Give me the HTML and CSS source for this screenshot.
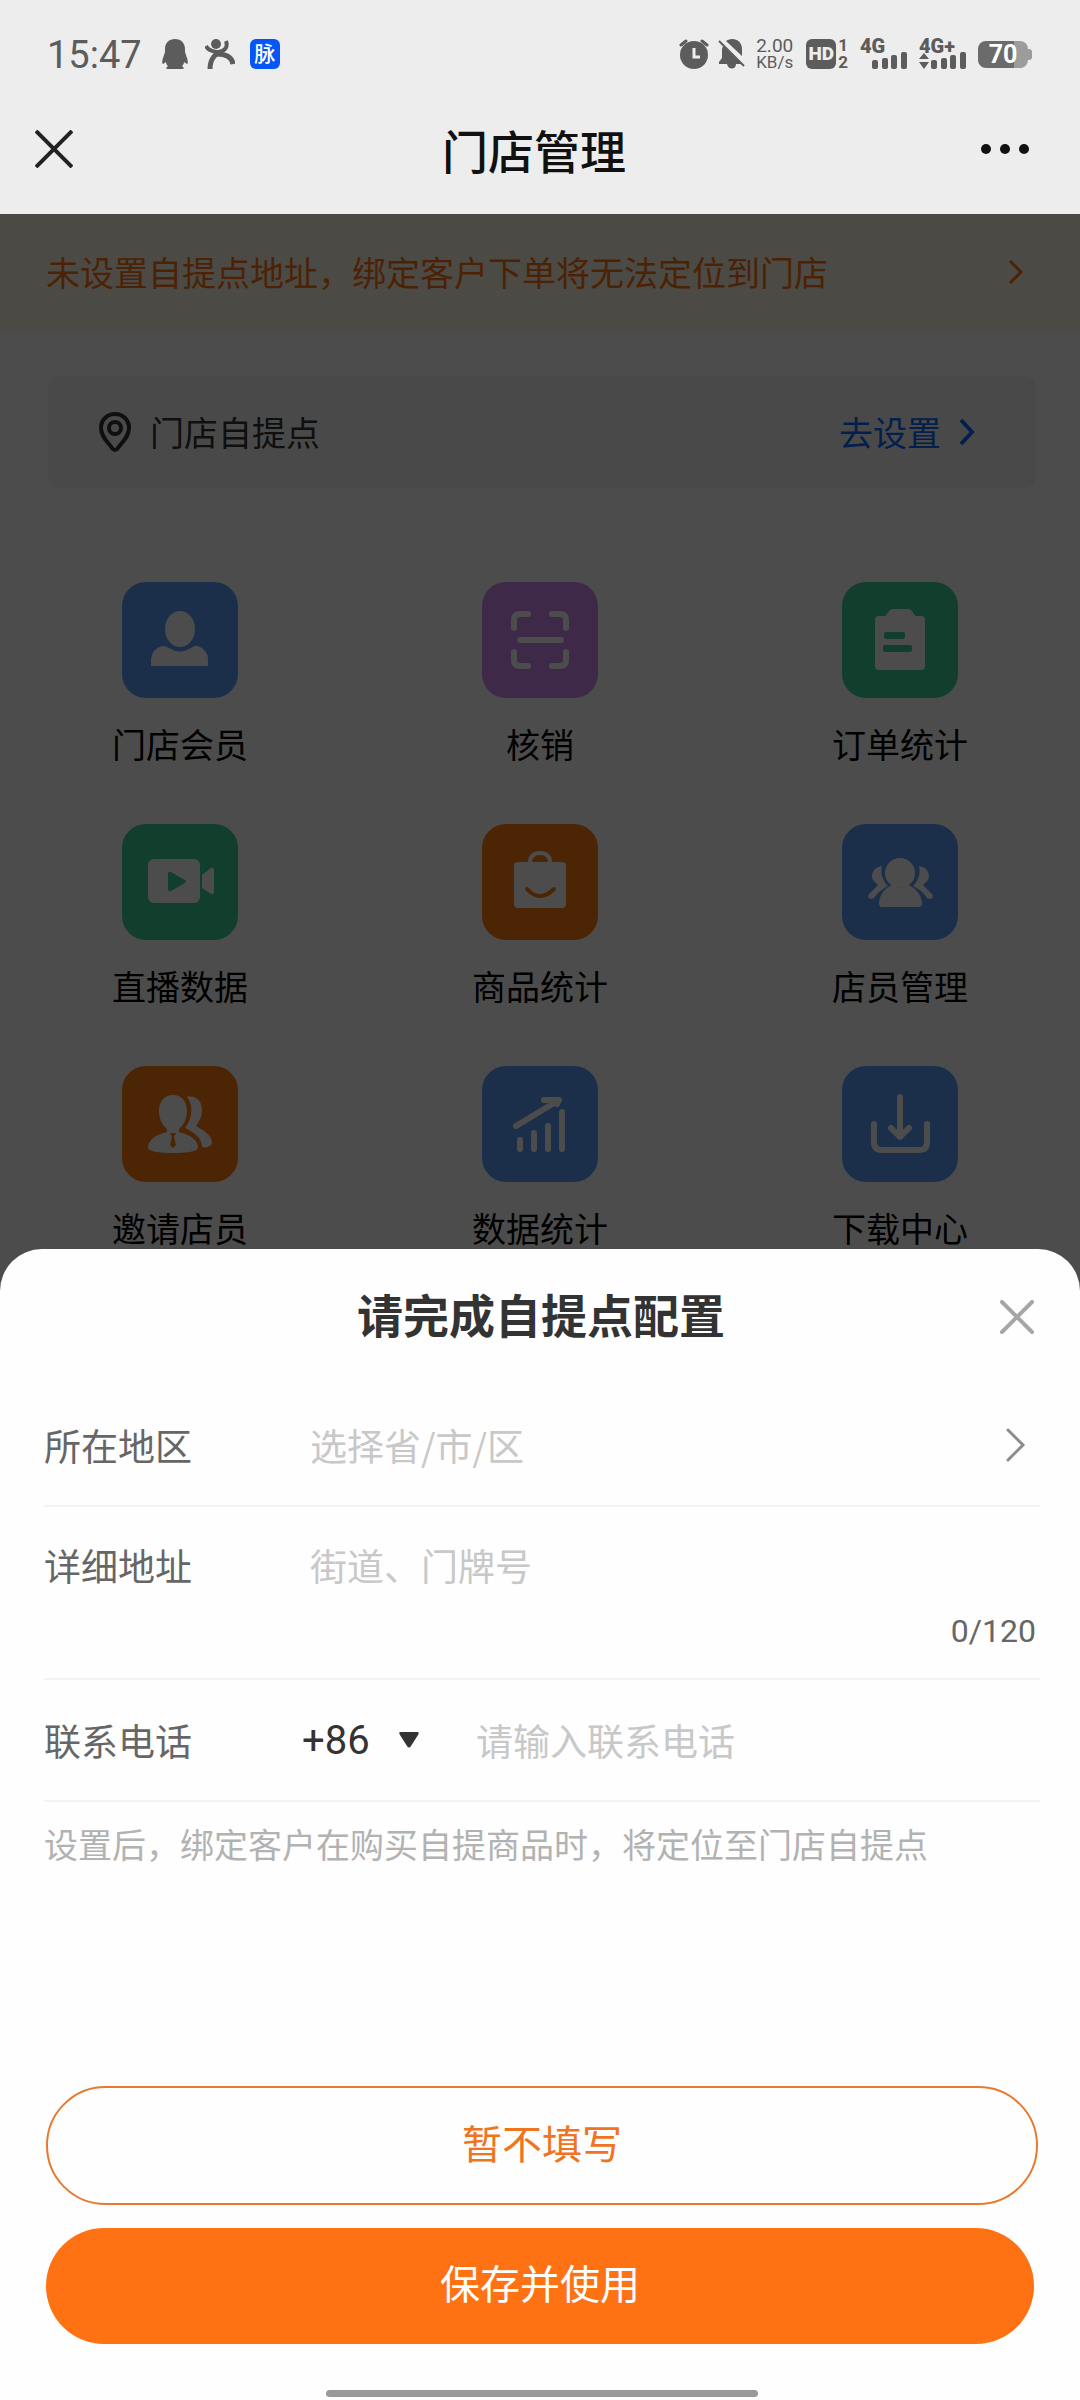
FILE: index.html
```html
<!DOCTYPE html>
<html lang="zh-CN">
<head>
  <meta charset="UTF-8">
  <meta name="viewport" content="width=device-width, initial-scale=1.0">
  <title>门店管理</title>
  <link rel="stylesheet" href="styles.css">
</head>
<body>

  <!-- Top: status bar + title bar -->
  <header class="top">
    <div class="status">
      <div class="status-left">
        <span class="time">15:47</span>
        <svg class="icon-qq" width="26" height="30" viewBox="0 0 26 30" fill="#5c5c5c">
          <path d="M13 0C7 0 3 4 3 10v3l-2 6c-1 3-1 6 0 6l3-2c0 2 1 3 2 4-2 1-2 3-1 3h16c1 0 1-2-1-3 1-1 2-2 2-4l3 2c1 0 1-3 0-6l-2-6v-3c0-6-4-10-10-10z"/>
        </svg>
        <svg class="icon-run" width="30" height="30" viewBox="0 0 30 30" fill="none" stroke="#5c5c5c">
          <circle cx="11" cy="5" r="5" fill="#5c5c5c" stroke="none"/>
          <path d="M1 7c3 6 15 8 19 3 2-2 2-5 1-8" stroke-width="4"/>
          <path d="M5 30c0-9 5-17 13-17M12 15c10 0 15 4 16 10" stroke-width="5"/>
        </svg>
        <span class="app-mark">脉</span>
      </div>
      <div class="status-right">
        <svg class="icon-alarm" width="30" height="30" viewBox="0 0 30 30">
          <circle cx="15" cy="16" r="14" fill="#5c5c5c"/>
          <path d="M2 6l5-4M28 6l-5-4" stroke="#5c5c5c" stroke-width="3" stroke-linecap="round"/>
          <path d="M15 9v9h6" fill="none" stroke="#ededed" stroke-width="3"/>
        </svg>
        <svg class="icon-mute" width="28" height="30" viewBox="0 0 28 30">
          <path d="M14 0c6 0 10 4 10 10v7L8 2c2-1 3-2 6-2zM5 7l19 18h-6c0 6-8 6-9 0H1v-2l3-4V10z" fill="#5c5c5c"/>
          <path d="M1 2l25 25" stroke="#5c5c5c" stroke-width="2"/>
        </svg>
        <span class="speed"><span>2.00</span><span class="speed-unit">KB/s</span></span>
        <span class="hd-group"><span class="hd">HD</span><span class="sims"><b>1</b><b>2</b></span></span>
        <span class="signal">
          <span class="net">4G</span>
          <svg width="47" height="17" viewBox="0 0 47 17" fill="#5c5c5c">
            <rect x="12" y="8" width="6" height="9" rx="2"/><rect x="22" y="6" width="6" height="11" rx="2"/>
            <rect x="31" y="3" width="6" height="14" rx="2"/><rect x="41" y="0" width="6" height="17" rx="2"/>
          </svg>
        </span>
        <span class="signal">
          <span class="net">4G+</span>
          <svg width="47" height="17" viewBox="0 0 47 17" fill="#5c5c5c">
            <path d="M0 7l5-6 5 6zM0 10h10l-5 7z"/>
            <rect x="12" y="8" width="6" height="9" rx="2"/><rect x="22" y="6" width="6" height="11" rx="2"/>
            <rect x="31" y="3" width="6" height="14" rx="2"/><rect x="41" y="0" width="6" height="17" rx="2"/>
          </svg>
        </span>
        <span class="battery">70</span>
      </div>
    </div>
    <div class="titlebar">
      <button class="icon-btn" aria-label="关闭页面">
        <svg width="38" height="38" viewBox="0 0 38 38" stroke="#222" stroke-width="4"><path d="M1 1l36 36M37 1L1 37"/></svg>
      </button>
      <h1>门店管理</h1>
      <button class="icon-btn" aria-label="更多">
        <svg width="48" height="10" viewBox="0 0 48 10" fill="#111"><circle cx="5" cy="5" r="5"/><circle cx="24" cy="5" r="5"/><circle cx="43" cy="5" r="5"/></svg>
      </button>
    </div>
  </header>

  <!-- Store page -->
  <main>
    <a class="notice" href="#">
      <span>未设置自提点地址，绑定客户下单将无法定位到门店</span>
      <svg width="16" height="24" viewBox="0 0 16 24" fill="none" stroke="#ff7213" stroke-width="3"><path d="M2 1l11 11L2 23"/></svg>
    </a>

    <div class="pickup">
      <svg width="32" height="40" viewBox="0 0 32 40" fill="none" stroke="#333" stroke-width="4">
        <path d="M16 2C8 2 2 8 2 16c0 9 7 14 11 20q3 4 6 0c4-6 11-11 11-20 0-8-6-14-14-14z"/><circle cx="16" cy="16" r="6"/>
      </svg>
      <span class="pickup-name">门店自提点</span>
      <a class="pickup-link" href="#">去设置
        <svg width="16" height="28" viewBox="0 0 16 28" fill="none" stroke="#0a6cff" stroke-width="4"><path d="M2 2l11 12L2 26"/></svg>
      </a>
    </div>

    <nav class="menu">
      <a class="item" href="#">
        <svg class="tile blue" viewBox="0 0 116 116">
          <ellipse cx="58" cy="47" rx="15" ry="18"/>
          <path d="M29 84v-7q1-10 11-13 4 0 7 2 11 7 22 0 4-3 7-2 10 4 10 13v7z"/>
        </svg>
        <span>门店会员</span>
      </a>
      <a class="item" href="#">
        <svg class="tile purple" viewBox="0 0 116 116">
          <path class="line" d="M32 46v-8q0-6 6-6h8M70 32h8q6 0 6 6v8M84 70v8q0 6-6 6h-8M46 84h-8q-6 0-6-6v-8M38 58h41"/>
        </svg>
        <span>核销</span>
      </a>
      <a class="item" href="#">
        <svg class="tile green" viewBox="0 0 116 116">
          <path d="M37 34h42q4 0 4 4v46q0 4-4 4H37q-4 0-4-4V38q0-4 4-4z"/>
          <path d="M44 33l4-5q1-1 3-1h15q2 0 3 1l4 5q1 4-3 4H47q-4 0-3-4z"/>
          <rect class="cut" x="42" y="50" width="21" height="7" rx="2"/>
          <rect class="cut" x="41" y="63" width="29" height="7" rx="2"/>
        </svg>
        <span>订单统计</span>
      </a>
      <a class="item" href="#">
        <svg class="tile green" viewBox="0 0 116 116">
          <rect x="26" y="35" width="52" height="44" rx="6"/>
          <path d="M80 51l9-7q3-1 3 2v22q0 3-3 2l-9-6z"/>
          <path class="cut" d="M46 50q0-3 3-2l14 8q2 1 0 3l-14 8q-3 1-3-2z"/>
        </svg>
        <span>直播数据</span>
      </a>
      <a class="item" href="#">
        <svg class="tile orange" viewBox="0 0 116 116">
          <rect x="32" y="38" width="52" height="46" rx="4"/>
          <path d="M48 39q0-10 10-10t10 10" fill="none" stroke="#fff" stroke-width="4"/>
          <path d="M45 65q13 14 27 0" fill="none" stroke="#ff7d12" stroke-width="4" stroke-linecap="round"/>
        </svg>
        <span>商品统计</span>
      </a>
      <a class="item" href="#">
        <svg class="tile blue" viewBox="0 0 116 116">
          <circle cx="58" cy="49" r="15"/>
          <path d="M50 61q8 6 16 0c8 3 13 9 14 18q0 4-3 4H40q-3 0-3-4c1-9 6-15 13-18z"/>
          <path d="M40 42c-8 1-12 8-9 14l5 5-9 9q-2 4 2 5l3-1c3-5 8-9 14-12-5-5-8-12-6-20zM77 42c8 1 12 8 9 14l-5 5 9 9q2 4-2 5l-3-1c-3-5-8-9-14-12 5-5 8-12 6-20z"/>
        </svg>
        <span>店员管理</span>
      </a>
      <a class="item" href="#">
        <svg class="tile orange" viewBox="0 0 116 116">
          <path d="M51 29c9 0 14 7 14 16 0 7-3 14-8 18v3c12 3 19 8 19 16 0 3-11 5-25 5s-25-2-25-5c0-8 7-13 19-16v-3c-5-4-8-11-8-18 0-9 5-16 14-16z"/>
          <path d="M65 31c9-2 15 4 15 13 0 6-3 12-6 16 9 5 16 10 16 17 0 3-5 5-10 4 0-9-8-15-17-19 7-9 9-22 2-31z"/>
          <path class="cut" d="M48 67h6l-2 4 2 8-3 3-3-3 2-8z"/>
        </svg>
        <span>邀请店员</span>
      </a>
      <a class="item" href="#">
        <svg class="tile blue" viewBox="0 0 116 116">
          <path class="line" d="M34 60l43-26H62M77 34l-2 4M38 74v9M52 67v16M66 60v23M80 46v37"/>
        </svg>
        <span>数据统计</span>
      </a>
      <a class="item" href="#">
        <svg class="tile blue" viewBox="0 0 116 116">
          <path class="line" d="M58 31v40M49 62l9 9 9-9M32 58v18q0 8 8 8h37q8 0 8-8V58"/>
        </svg>
        <span>下载中心</span>
      </a>
    </nav>
  </main>

  <!-- Dark mask + bottom sheet -->
  <div class="mask">
    <form class="sheet">
      <div class="sheet-head">
        <h2>请完成自提点配置</h2>
        <button class="icon-btn" type="button" aria-label="关闭">
          <svg width="34" height="34" viewBox="0 0 34 34" stroke="#a6a6a6" stroke-width="4" stroke-linecap="round"><path d="M2 2l30 30M32 2L2 32"/></svg>
        </button>
      </div>

      <div class="row">
        <label for="region">所在地区</label>
        <input id="region" type="text" placeholder="选择省/市/区" readonly>
        <svg class="row-arrow" width="20" height="34" viewBox="0 0 20 34" fill="none" stroke="#8c8c8c" stroke-width="3" stroke-linecap="round"><path d="M2 2l15 15L2 32"/></svg>
      </div>

      <div class="row row-address">
        <label for="address">详细地址</label>
        <input id="address" type="text" placeholder="街道、门牌号" maxlength="120">
        <span class="counter">0/120</span>
      </div>

      <div class="row">
        <label for="phone">联系电话</label>
        <span class="code">
          <select aria-label="国家区号"><option>+86</option></select>
          <svg width="20" height="16" viewBox="0 0 20 16" fill="#333"><path d="M2 0h16q3 0 1 3l-7 11q-2 3-4 0L1 3q-2-3 1-3z"/></svg>
        </span>
        <input id="phone" type="tel" placeholder="请输入联系电话">
      </div>

      <p class="hint">设置后，绑定客户在购买自提商品时，将定位至门店自提点</p>

      <div class="actions">
        <button class="btn btn-plain" type="button">暂不填写</button>
        <button class="btn btn-main" type="submit">保存并使用</button>
      </div>
      <div class="home-bar"></div>
    </form>
  </div>

</body>
</html>
```
FILE: styles.css
```css
* {
  box-sizing: border-box;
}

body {
  margin: 0;
  min-height: 100vh;
  background: #fff;
  font-family: "Noto Sans CJK SC", sans-serif;
  font-size: 34px;
  line-height: 50px;
  overflow: hidden;
}

a {
  color: inherit;
  text-decoration: none;
}

h1, h2, p {
  margin: 0;
}

svg {
  display: block;
  flex: none;
}

.icon-btn {
  border: none;
  background: none;
  padding: 0;
}

/* Top */
.top {
  position: relative;
  z-index: 2;
  background: #ededed;
}

.status {
  display: flex;
  justify-content: space-between;
  align-items: center;
  height: 84px;
  padding: 24px 48px 0 47px;
  color: #5c5c5c;
  font-family: Roboto, "Noto Sans CJK SC", sans-serif;
}

.status-left, .status-right {
  display: flex;
  align-items: center;
}

.time {
  padding-top: 2px;
  font-size: 38px;
  margin-right: 20px;
}

.icon-qq {
  margin-right: 17px;
}

.icon-run {
  margin-right: 15px;
}

.app-mark {
  width: 30px;
  height: 30px;
  border-radius: 6px;
  background: #0557f5;
  color: #fff;
  font-size: 21px;
  font-weight: 500;
  line-height: 30px;
  text-align: center;
}

.icon-alarm {
  margin-right: 9px;
}

.speed {
  display: flex;
  flex-direction: column;
  margin: 0 13px 0 10px;
  font-size: 19px;
  line-height: 17px;
  text-align: center;
}

.speed-unit {
  font-size: 17px;
}

.hd-group {
  display: flex;
  align-items: center;
  gap: 2px;
  margin-right: 12px;
}

.hd {
  width: 30px;
  height: 30px;
  border-radius: 6px;
  background: #5c5c5c;
  color: #ededed;
  font-size: 19px;
  font-weight: 900;
  line-height: 30px;
  text-align: center;
}

.sims {
  display: flex;
  flex-direction: column;
  font-size: 17px;
  line-height: 17px;
}

.signal {
  display: flex;
  flex-direction: column;
  height: 30px;
  margin-right: 12px;
}

.signal svg {
  margin-top: -2px;
}

.net {
  font-size: 20px;
  font-weight: 900;
  line-height: 15px;
}

.battery {
  position: relative;
  width: 50px;
  height: 27px;
  margin-right: 4px;
  border-radius: 8px;
  background: linear-gradient(90deg, #6b6b6b 72%, #9c9c9c 72%);
  color: #fff;
  font-size: 25px;
  font-weight: 700;
  line-height: 28px;
  text-align: center;
}

.battery::after {
  content: "";
  position: absolute;
  left: 50px;
  top: 8px;
  width: 4px;
  height: 11px;
  border-radius: 0 3px 3px 0;
  background: #9c9c9c;
}

.titlebar {
  display: flex;
  align-items: center;
  height: 130px;
  padding: 0 51px 0 35px;
}

.titlebar h1 {
  flex: 1;
  padding-left: 14px;
  color: #111;
  font-size: 46px;
  font-weight: 500;
  text-align: center;
}

/* Store page */
.notice {
  display: flex;
  justify-content: space-between;
  align-items: center;
  height: 116px;
  padding: 0 56px 0 46px;
  background: #fff7e6;
  color: #ff7213;
}

.pickup {
  display: flex;
  align-items: center;
  height: 112px;
  margin: 46px 44px 94px 48px;
  padding: 0 61px 0 51px;
  border-radius: 12px;
  background: #f6f6f6;
  color: #333;
}

.pickup-name {
  flex: 1;
  padding-left: 19px;
}

.pickup-link {
  display: flex;
  align-items: center;
  gap: 18px;
  color: #0a6cff;
}

.menu {
  display: grid;
  grid-template-columns: repeat(3, 1fr);
  row-gap: 55px;
}

.item {
  display: flex;
  flex-direction: column;
  align-items: center;
  gap: 21px;
  color: #000;
}

.tile {
  width: 116px;
  height: 116px;
  border-radius: 24px;
  fill: #fff;
}

.tile .line {
  fill: none;
  stroke: #fff;
  stroke-width: 6;
  stroke-linecap: round;
  stroke-linejoin: round;
}

.blue { background: #5a9dfa; }
.blue .cut { fill: #5a9dfa; }
.purple { background: #cf8ef0; }
.green { background: #3ecf99; }
.green .cut { fill: #3ecf99; }
.orange { background: #ff7d12; }
.orange .cut { fill: #ff7d12; }

/* Mask and sheet */
.mask {
  position: fixed;
  inset: 0;
  z-index: 1;
  display: flex;
  align-items: flex-end;
  background: rgba(0, 0, 0, 0.7);
}

.sheet {
  width: 100%;
  padding: 0 40px 3px 44px;
  border-radius: 42px 42px 0 0;
  background: #fefefe;
}

.sheet-head {
  display: flex;
  align-items: center;
  height: 136px;
  padding-right: 6px;
}

.sheet-head h2 {
  flex: 1;
  padding-left: 38px;
  color: #333;
  font-family: Roboto, "Noto Sans CJK SC", sans-serif;
  font-size: 46px;
  font-weight: 700;
  text-align: center;
}

.row {
  display: flex;
  align-items: center;
  min-height: 122px;
  border-bottom: 2px solid #f3f3f3;
  font-size: 37px;
}

.row label {
  width: 258px;
  color: #666;
}

.row input {
  flex: 1;
  min-width: 0;
  height: 50px;
  border: none;
  outline: none;
  padding: 0 8px;
  background: none;
  font: inherit;
  color: #333;
}

.row input::placeholder {
  color: #c8c8c8;
  opacity: 1;
}

.row-arrow {
  margin-right: 14px;
}

.row-address {
  flex-wrap: wrap;
  row-gap: 16px;
  padding: 33px 0 22px;
}

.counter {
  width: 100%;
  padding-right: 4px;
  color: #666;
  font-family: Roboto, sans-serif;
  font-size: 32px;
  text-align: right;
}

.code {
  position: relative;
  width: 166px;
}

.code select {
  display: block;
  width: 100%;
  height: 50px;
  border: none;
  padding: 0;
  appearance: none;
  background: none;
  color: #333;
  font-family: Roboto, sans-serif;
  font-size: 40px;
}

/* Caret over the select */
.code svg {
  position: absolute;
  left: 97px;
  top: 17px;
  pointer-events: none;
}

.hint {
  padding-top: 17px;
  color: #b2b2b2;
  white-space: nowrap;
}

.actions {
  display: flex;
  flex-direction: column;
  gap: 23px;
  margin: 217px 2px 46px;
}

.btn {
  height: 116px;
  border: none;
  border-radius: 60px;
  font-family: Roboto, "Noto Sans CJK SC", sans-serif;
  font-size: 40px;
  line-height: 50px;
}

.btn-plain {
  height: 119px;
  border: 2px solid #e87a30;
  background: #fefefe;
  color: #f0741f;
}

.btn-main {
  margin-right: 4px;
  background: #ff7213;
  color: #fff;
}

.home-bar {
  width: 432px;
  height: 7px;
  margin: 0 auto;
  border-radius: 4px;
  background: #999;
}
```
